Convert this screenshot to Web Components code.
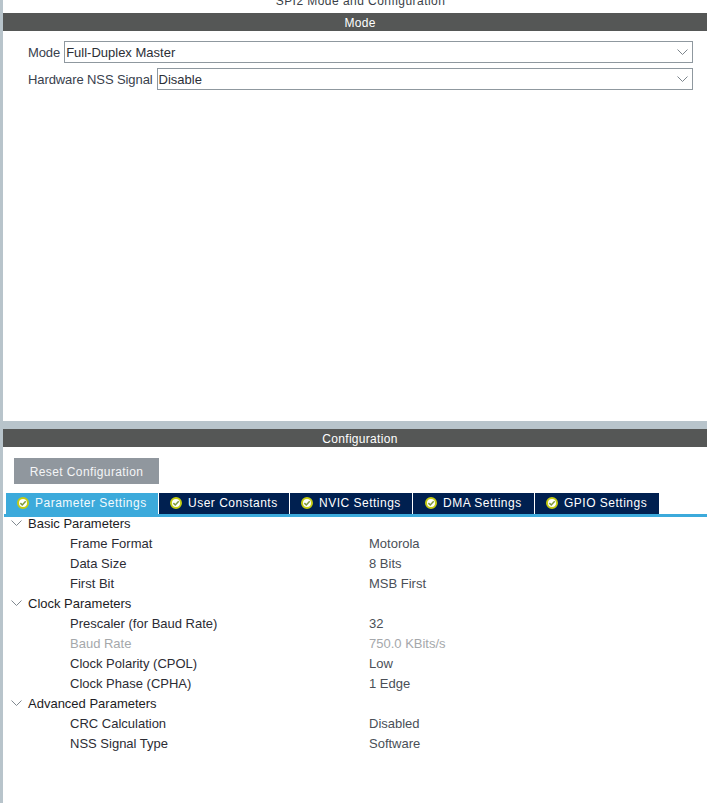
<!DOCTYPE html>
<html><head><meta charset="utf-8"><style>
html,body{margin:0;padding:0;height:803px;overflow:hidden;background:#fff;font:13px "Liberation Sans",Arial,sans-serif;color:#2b2b33}
</style></head><body>
<template id="t-select"><style>
:host{display:flex;align-items:center;height:22px;gap:4px;font-size:13px;color:#39414d}
.l{flex:none;white-space:nowrap;letter-spacing:-.1px}
.b{flex:1;height:22px;box-sizing:border-box;border:1px solid #8f989f;display:flex;align-items:center;justify-content:space-between;padding:0 4px 0 1px;background:#fff;color:#2c2f36}
svg{width:11px;height:6px;flex:none}
</style><span class="l"><slot name="label"></slot></span><div class="b"><slot></slot><svg viewBox="0 0 11 6"><path d="M.5.5 5.5 5.5 10.5.5" fill="none" stroke="#7d858c" stroke-width="1"/></svg></div></template>

<template id="t-bar"><style>
:host{display:block;height:18px;line-height:20px;background:#555756;color:#fff;text-align:center;font-size:12px;letter-spacing:.3px;padding-left:10px}
</style><slot></slot></template>

<template id="t-tab"><style>
:host{display:flex;align-items:center;height:21px;box-sizing:border-box;padding-bottom:2px;background:#002050;color:#fff;font-size:12px;letter-spacing:.5px;white-space:nowrap;flex:none}
:host([active]){background:#3caadb;color:#f3fafd}
svg{width:12px;height:12px;flex:none;margin-right:6px}
</style><svg viewBox="0 0 12 12"><circle cx="6" cy="6" r="5" fill="#fff" stroke="#c5cc12" stroke-width="2"/><path d="M3.4 6.1 5.3 8 8.7 4.3" fill="none" stroke="#7f9a3a" stroke-width="1.5"/></svg><slot></slot></template>

<template id="t-group"><style>
:host{display:block}
.h{display:flex;align-items:center;height:20px;color:#1c1c24;font-size:13px;padding-left:8px}
svg{width:11px;height:6px;margin-right:6px;flex:none}
</style><div class="h"><svg viewBox="0 0 11 6"><path d="M.5.5 5.5 5.5 10.5.5" fill="none" stroke="#808890" stroke-width="1"/></svg><slot name="title"></slot></div><slot></slot></template>

<template id="t-param"><style>
:host{display:grid;grid-template-columns:299px 1fr;height:20px;line-height:22px;padding-left:67px;font-size:13px;color:#2c2c34}
:host([disabled]){color:#a5a8ab}
.v{color:#4a4f57}
:host([disabled]) .v{color:#a5a8ab}
</style><span><slot name="name"></slot></span><span class="v"><slot></slot></span></template>

<template id="t-app"><style>
:host{display:flex;flex-direction:column;height:803px;box-sizing:border-box;border-left:3px solid #b8c4cb;background:#fff;overflow:hidden}
.title{height:13px;line-height:2px;text-align:center;font-size:12px;letter-spacing:.45px;color:#3a3f48;padding-left:11px}
.mode{height:390px;box-sizing:border-box;padding:10px 14px 0 25px;display:flex;flex-direction:column;gap:5px}
.split{height:8px;background:#b8c4cb}
.cfg{flex:1;display:flex;flex-direction:column}
.reset{align-self:flex-start;margin:11px 0 0 11px;width:145px;height:26px;line-height:28px;text-align:center;background:#90979e;color:#f4f5f6;font-size:12px;letter-spacing:.4px}
.tabs{display:flex;margin:9px 0 0 3px;gap:1px}
.line{height:3px;background:#3caadb;margin-left:1px}
.rows{margin-top:-4px}
</style>
<div class="title">SPI2 Mode and Configuration</div>
<x-bar>Mode</x-bar>
<div class="mode">
<x-select><span slot="label">Mode</span>Full-Duplex Master</x-select>
<x-select><span slot="label">Hardware NSS Signal</span>Disable</x-select>
</div>
<div class="split"></div>
<div class="cfg">
<x-bar>Configuration</x-bar>
<div class="reset">Reset Configuration</div>
<div class="tabs">
<x-tab active style="width:152px;padding-left:11px">Parameter Settings</x-tab>
<x-tab style="width:130px;padding-left:11px">User Constants</x-tab>
<x-tab style="width:122px;padding-left:11px">NVIC Settings</x-tab>
<x-tab style="width:121px;padding-left:12px">DMA Settings</x-tab>
<x-tab style="width:124px;padding-left:11px">GPIO Settings</x-tab>
</div>
<div class="line"></div>
<div class="rows">
<x-group><span slot="title">Basic Parameters</span>
<x-param><span slot="name">Frame Format</span>Motorola</x-param>
<x-param><span slot="name">Data Size</span>8 Bits</x-param>
<x-param><span slot="name">First Bit</span>MSB First</x-param>
</x-group>
<x-group><span slot="title">Clock Parameters</span>
<x-param><span slot="name">Prescaler (for Baud Rate)</span>32</x-param>
<x-param disabled><span slot="name">Baud Rate</span>750.0 KBits/s</x-param>
<x-param><span slot="name">Clock Polarity (CPOL)</span>Low</x-param>
<x-param><span slot="name">Clock Phase (CPHA)</span>1 Edge</x-param>
</x-group>
<x-group><span slot="title">Advanced Parameters</span>
<x-param><span slot="name">CRC Calculation</span>Disabled</x-param>
<x-param><span slot="name">NSS Signal Type</span>Software</x-param>
</x-group>
</div>
</div></template>
<x-app></x-app>
<script>
for(const [n,id] of [['x-select','t-select'],['x-bar','t-bar'],['x-tab','t-tab'],['x-group','t-group'],['x-param','t-param'],['x-app','t-app']]){
customElements.define(n,class extends HTMLElement{constructor(){super();this.attachShadow({mode:'open'}).appendChild(document.getElementById(id).content.cloneNode(true))}})
}
</script></body></html>
